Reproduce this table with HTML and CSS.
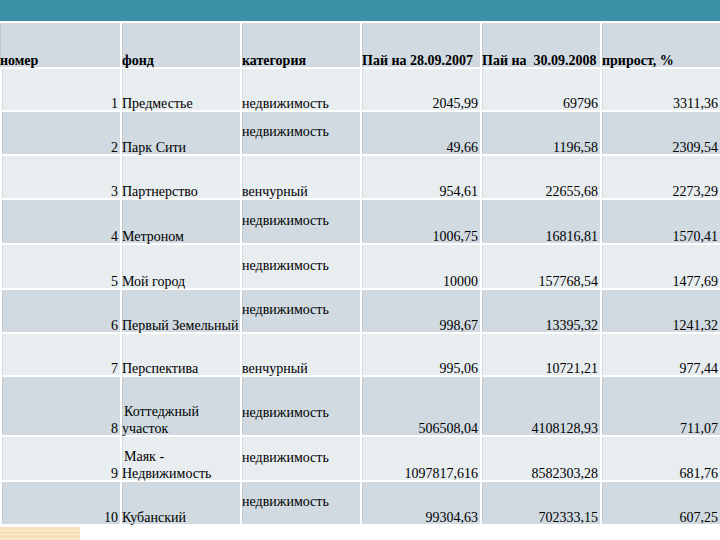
FILE: index.html
```html
<!DOCTYPE html>
<html lang="ru">
<head>
<meta charset="utf-8">
<title>Паи</title>
<link rel="stylesheet" href="styles.css">
</head>
<body>
<div class="bar"></div>
<table class="funds">
<colgroup><col class="col"><col class="col"><col class="col"><col class="col"><col class="col"><col class="col"></colgroup>
<thead>
<tr class="head">
<th class="first">номер</th><th>фонд</th><th>категория</th><th>Пай на 28.09.2007</th><th>Пай на&nbsp; 30.09.2008</th><th>прирост, %</th>
</tr>
</thead>
<tbody>
<tr class="light h43"><td class="num">1</td><td class="name">Предместье</td><td class="cat">недвижимость</td><td class="val">2045,99</td><td class="val">69796</td><td class="val">3311,36</td></tr>
<tr class="dark"><td class="num">2</td><td class="name">Парк Сити</td><td class="cat up">недвижимость</td><td class="val">49,66</td><td class="val">1196,58</td><td class="val">2309,54</td></tr>
<tr class="light"><td class="num">3</td><td class="name">Партнерство</td><td class="cat">венчурный</td><td class="val">954,61</td><td class="val">22655,68</td><td class="val">2273,29</td></tr>
<tr class="dark h45"><td class="num">4</td><td class="name">Метроном</td><td class="cat up">недвижимость</td><td class="val">1006,75</td><td class="val">16816,81</td><td class="val">1570,41</td></tr>
<tr class="light h45"><td class="num">5</td><td class="name">Мой город</td><td class="cat up">недвижимость</td><td class="val">10000</td><td class="val">157768,54</td><td class="val">1477,69</td></tr>
<tr class="dark"><td class="num">6</td><td class="name">Первый Земельный</td><td class="cat up">недвижимость</td><td class="val">998,67</td><td class="val">13395,32</td><td class="val">1241,32</td></tr>
<tr class="light h43"><td class="num">7</td><td class="name">Перспектива</td><td class="cat">венчурный</td><td class="val">995,06</td><td class="val">10721,21</td><td class="val">977,44</td></tr>
<tr class="dark tall"><td class="num">8</td><td class="name"><span class="line1">Коттеджный</span>участок</td><td class="cat up">недвижимость</td><td class="val">506508,04</td><td class="val">4108128,93</td><td class="val">711,07</td></tr>
<tr class="light h45"><td class="num">9</td><td class="name"><span class="line1">Маяк -</span>Недвижимость</td><td class="cat up">недвижимость</td><td class="val">1097817,616</td><td class="val">8582303,28</td><td class="val">681,76</td></tr>
<tr class="dark"><td class="num">10</td><td class="name">Кубанский</td><td class="cat up">недвижимость</td><td class="val">99304,63</td><td class="val">702333,15</td><td class="val">607,25</td></tr>
</tbody>
</table>
<div class="deco"></div>
</body>
</html>
```

FILE: styles.css
```css
html, body {
  margin: 0;
  padding: 0;
  background: #ffffff;
}

body {
  font-family: "Liberation Serif", "DejaVu Serif", serif;
  font-size: 14px;
  color: #000000;
  width: 720px;
  height: 540px;
  overflow: hidden;
}

.bar {
  height: 21px;
  background: #3b8fa6;
}

.funds {
  width: 720px;
  table-layout: fixed;
  border-collapse: separate;
  border-spacing: 0;
  font-family: "Liberation Serif", "DejaVu Serif", serif;
  font-size: 14px;
}

.col {
  width: 120px;
}

.funds th,
.funds td {
  padding: 0 2px 0 0;
  vertical-align: bottom;
  line-height: 12px;
  border-top: 2px solid #ffffff;
  border-left: 2px solid #ffffff;
  box-shadow: inset 1px 0 0 rgba(120, 140, 150, 0.18);
  white-space: nowrap;
  overflow: visible;
}

.funds th {
  text-align: left;
  font-weight: bold;
}

.funds th.first {
  border-left-width: 0;
}

.head {
  height: 46px;
  background: #d0dae0;
}

.light {
  height: 44px;
  background: #e8edf0;
}

.dark {
  height: 44px;
  background: #d0dae0;
}

.h43 {
  height: 43px;
}

.h45 {
  height: 45px;
}

.tall {
  height: 60px;
}

.num {
  text-align: right;
}

.name {
  text-align: left;
}

.line1 {
  display: block;
  padding-left: 2px;
  margin-bottom: 5px;
}

.cat {
  text-align: left;
}

.up {
  padding-bottom: 16px !important;
}

.val {
  text-align: right;
}

.deco {
  width: 80px;
  height: 13px;
  margin-top: 3px;
  background: repeating-linear-gradient(to bottom, #f4dfb6 0, #f4dfb6 3px, #fbefd9 3px, #fbefd9 4px);
}
```
